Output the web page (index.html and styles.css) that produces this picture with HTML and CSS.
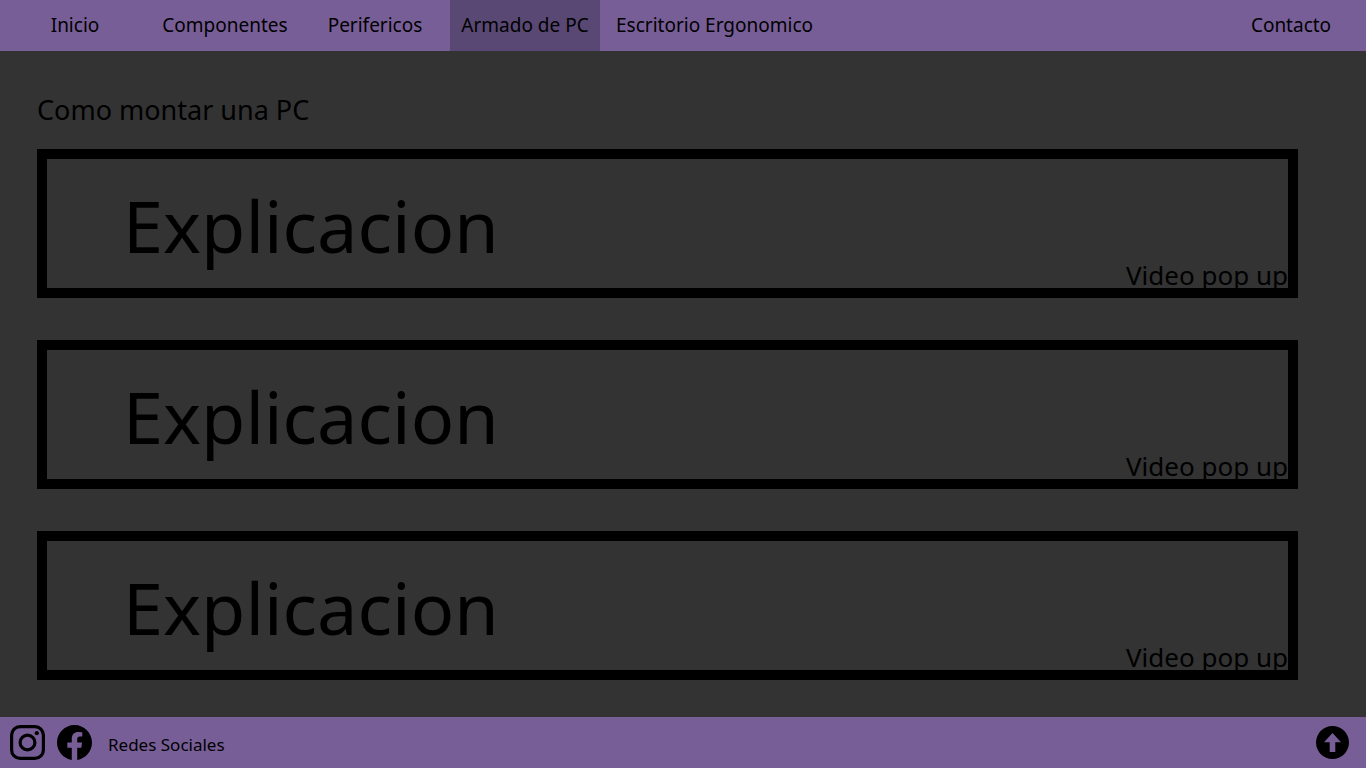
FILE: index.html
```html
<!DOCTYPE html>
<html lang="es">
<head>
<meta charset="utf-8">
<meta name="viewport" content="width=device-width, initial-scale=1">
<title>Como montar una PC</title>
<link rel="stylesheet" href="styles.css">
</head>
<body>
<header>
  <nav class="nav">
    <a class="nav-link" href="#inicio">Inicio</a>
    <a class="nav-link" href="#componentes">Componentes</a>
    <a class="nav-link" href="#perifericos">Perifericos</a>
    <a class="nav-link active" href="#armado" aria-current="page">Armado de PC</a>
    <a class="nav-link wide" href="#escritorio">Escritorio Ergonomico</a>
    <a class="nav-link last" href="#contacto">Contacto</a>
  </nav>
</header>
<main class="content">
  <h1 class="title">Como montar una PC</h1>
  <div class="steps">
    <section class="step">
      <h2 class="step-title">Explicacion</h2>
      <button class="video" type="button">Video pop up</button>
    </section>
    <section class="step">
      <h2 class="step-title">Explicacion</h2>
      <button class="video" type="button">Video pop up</button>
    </section>
    <section class="step">
      <h2 class="step-title">Explicacion</h2>
      <button class="video" type="button">Video pop up</button>
    </section>
  </div>
</main>
<footer class="footer">
  <a class="icon-link" href="#instagram" aria-label="Instagram">
    <svg width="35" height="35" viewBox="0 0 35 35" fill="none" stroke="#000">
      <rect x="1.6" y="1.6" width="31.8" height="31.8" rx="8.5" stroke-width="3.2"/>
      <circle cx="17.5" cy="17.5" r="7.4" stroke-width="3.2"/>
      <circle cx="26.8" cy="8.2" r="2.1" fill="#000" stroke="none"/>
    </svg>
  </a>
  <a class="icon-link" href="#facebook" aria-label="Facebook">
    <svg width="35" height="35" viewBox="0 0 24 24">
      <path d="M24 12.07C24 5.4 18.63 0 12 0S0 5.4 0 12.07C0 18.1 4.39 23.1 10.13 24v-8.44H7.08v-3.49h3.05V9.41c0-3.02 1.79-4.69 4.53-4.69 1.31 0 2.68.24 2.68.24v2.97h-1.51c-1.49 0-1.96.93-1.96 1.89v2.25h3.33l-.53 3.49h-2.8V24C19.61 23.1 24 18.1 24 12.07z"/>
    </svg>
  </a>
  <span class="social">Redes Sociales</span>
  <a class="icon-link to-top" href="#" aria-label="Volver arriba">
    <svg width="33" height="33" viewBox="0 0 33 33">
      <path fill-rule="evenodd" d="M16.5 0a16.500 16.500 0 1 0 0 33a16.500 16.500 0 1 0 0-33zM16.500 7L25 16.200H19.300V26H13.700V16.200H8z"/>
    </svg>
  </a>
</footer>
</body>
</html>
```
FILE: styles.css
```css
* {
  box-sizing: border-box;
}

body {
  margin: 0;
  min-height: 100vh;
  display: flex;
  flex-direction: column;
  background: #333;
  color: #000;
  font-family: "Noto Sans", "Open Sans", sans-serif;
}

a {
  color: inherit;
  text-decoration: none;
}

.nav {
  display: flex;
  height: 51px;
  background: #785e97;
  font-size: 19px;
}

.nav-link {
  display: flex;
  align-items: center;
  justify-content: center;
  width: 150px;
  padding-bottom: 2px;
  white-space: nowrap;
}

.nav-link.active {
  background: #594873;
}

.nav-link.wide {
  width: auto;
  padding: 0 16px 2px;
}

.nav-link.last {
  margin-left: auto;
}

.content {
  flex: 1;
  padding: 40px 68px 37px 37px;
}

.title {
  margin: 0 0 20px;
  font-size: 27px;
  font-weight: 400;
  line-height: 38px;
}

.steps {
  display: flex;
  flex-direction: column;
  gap: 42px;
}

.step {
  display: flex;
  flex-direction: column;
  justify-content: space-between;
  min-height: 149px;
  padding-top: 29px;
  border: 10px solid #000;
}

.step-title {
  margin: 0 0 0 76px;
  font-size: 72px;
  font-weight: 400;
  line-height: 74px;
}

.video {
  align-self: flex-end;
  padding: 0;
  border: 0;
  background: none;
  color: inherit;
  font-family: inherit;
  font-size: 26px;
  line-height: 26px;
  cursor: pointer;
}

.footer {
  display: flex;
  align-items: center;
  gap: 12px;
  height: 51px;
  padding: 0 17px 0 10px;
  background: #785e97;
}

.icon-link {
  display: flex;
}

.social {
  margin-left: 4px;
  padding-top: 4px;
  font-size: 17px;
}

.to-top {
  margin-left: auto;
}
```
